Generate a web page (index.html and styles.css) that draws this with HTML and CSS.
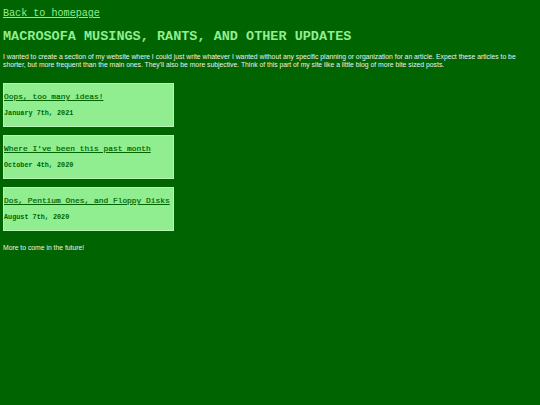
FILE: index.html
```html
<!DOCTYPE html>
<html>
<head>
<meta charset="utf-8">
<link rel="stylesheet" href="styles.css">
</head>
<body>
<div class="page">
  <a class="back" href="#">Back to homepage</a>
  <h1 class="title">MACROSOFA MUSINGS, RANTS, AND OTHER UPDATES</h1>
  <p class="intro">I wanted to create a section of my website where I could just write whatever I wanted without any specific planning or organization for an article. Expect these articles to be shorter, but more frequent than the main ones. They'll also be more subjective. Think of this part of my site like a little blog of more bite sized posts.</p>
  <div class="posts">
    <div class="card">
      <a class="card-title" href="#">Oops, too many ideas!</a>
      <div class="card-date">January 7th, 2021</div>
    </div>
    <div class="card">
      <a class="card-title" href="#">Where I've been this past month</a>
      <div class="card-date">October 4th, 2020</div>
    </div>
    <div class="card">
      <a class="card-title" href="#">Dos, Pentium Ones, and Floppy Disks</a>
      <div class="card-date">August 7th, 2020</div>
    </div>
  </div>
  <p class="outro">More to come in the future!</p>
</div>
</body>
</html>
```
FILE: styles.css
```css
html, body {
  margin: 0;
  padding: 0;
  background: #006400;
}
.page {
  padding: 8px 3px;
  display: flex;
  flex-direction: column;
  align-items: flex-start;
  font-family: "Liberation Sans", Arial, sans-serif;
  color: #f0f0f0;
}
.back {
  font-family: "Liberation Mono", "Courier New", monospace;
  font-size: 10.1px;
  line-height: 12px;
  color: #90ee90;
  text-decoration: underline;
}
.title {
  font-family: "Liberation Mono", "Courier New", monospace;
  font-size: 13.5px;
  font-weight: bold;
  line-height: 16px;
  color: #90ee90;
  margin: 9px 0 0 0;
}
.intro {
  font-size: 6.8px;
  line-height: 8px;
  margin: 8px 0 0 0;
  max-width: 518px;
}
.posts {
  display: flex;
  flex-direction: column;
  gap: 8px;
  margin-top: 14px;
}
.card {
  width: 169px;
  height: 34px;
  background: #90ee90;
  border: 1px solid #b8f7b8;
  display: flex;
  flex-direction: column;
  align-items: flex-start;
  padding-top: 8px;
}
.card-title {
  font-family: "Liberation Mono", "Courier New", monospace;
  font-size: 7.9px;
  line-height: 10px;
  color: #006400;
  text-decoration: underline;
  -webkit-text-stroke: 0.2px #006400;
}
.card-date {
  font-family: "Liberation Mono", "Courier New", monospace;
  font-size: 6.8px;
  font-weight: bold;
  line-height: 9px;
  color: #006400;
  margin-top: 7px;
}
.outro {
  font-size: 6.8px;
  line-height: 8px;
  margin: 13px 0 0 0;
}
```
